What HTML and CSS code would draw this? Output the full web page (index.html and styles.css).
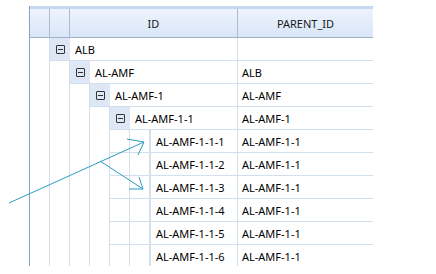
FILE: index.html
```html
<!DOCTYPE html>
<html lang="en">
<head>
    <meta charset="UTF-8">
    <title>TreeList</title>
    <link rel="stylesheet" href="styles.css">
</head>
<body>
    <div class="grid">
        <div class="head">
            <div class="sel"></div>
            <div class="hcell tree"></div>
            <div class="hcell id-head">ID</div>
            <div class="hcell parent-head">PARENT_ID</div>
        </div>

        <div class="row">
            <div class="sel"></div>
            <div class="idcol">
                <div class="exp"><span class="minus"></span></div>
                <div class="txt">ALB</div>
            </div>
            <div class="par"></div>
        </div>
        <div class="row">
            <div class="sel"></div>
            <div class="idcol">
                <div class="ind"></div>
                <div class="exp"><span class="minus"></span></div>
                <div class="txt">AL-AMF</div>
            </div>
            <div class="par">ALB</div>
        </div>
        <div class="row">
            <div class="sel"></div>
            <div class="idcol">
                <div class="ind"></div><div class="ind"></div>
                <div class="exp"><span class="minus"></span></div>
                <div class="txt">AL-AMF-1</div>
            </div>
            <div class="par">AL-AMF</div>
        </div>
        <div class="row">
            <div class="sel"></div>
            <div class="idcol">
                <div class="ind"></div><div class="ind"></div><div class="ind"></div>
                <div class="exp"><span class="minus"></span></div>
                <div class="txt">AL-AMF-1-1</div>
            </div>
            <div class="par">AL-AMF-1</div>
        </div>
        <div class="row">
            <div class="sel"></div>
            <div class="idcol">
                <div class="ind"></div><div class="ind"></div><div class="ind"></div>
                <div class="ind line"></div><div class="ind line"></div>
                <div class="txt">AL-AMF-1-1-1</div>
            </div>
            <div class="par">AL-AMF-1-1</div>
        </div>
        <div class="row">
            <div class="sel"></div>
            <div class="idcol">
                <div class="ind"></div><div class="ind"></div><div class="ind"></div>
                <div class="ind line"></div><div class="ind line"></div>
                <div class="txt">AL-AMF-1-1-2</div>
            </div>
            <div class="par">AL-AMF-1-1</div>
        </div>
        <div class="row">
            <div class="sel"></div>
            <div class="idcol">
                <div class="ind"></div><div class="ind"></div><div class="ind"></div>
                <div class="ind line"></div><div class="ind line"></div>
                <div class="txt">AL-AMF-1-1-3</div>
            </div>
            <div class="par">AL-AMF-1-1</div>
        </div>
        <div class="row">
            <div class="sel"></div>
            <div class="idcol">
                <div class="ind"></div><div class="ind"></div><div class="ind"></div>
                <div class="ind line"></div><div class="ind line"></div>
                <div class="txt">AL-AMF-1-1-4</div>
            </div>
            <div class="par">AL-AMF-1-1</div>
        </div>
        <div class="row">
            <div class="sel"></div>
            <div class="idcol">
                <div class="ind"></div><div class="ind"></div><div class="ind"></div>
                <div class="ind line"></div><div class="ind line"></div>
                <div class="txt">AL-AMF-1-1-5</div>
            </div>
            <div class="par">AL-AMF-1-1</div>
        </div>
        <div class="row last">
            <div class="sel"></div>
            <div class="idcol">
                <div class="ind"></div><div class="ind"></div><div class="ind"></div>
                <div class="ind line"></div><div class="ind line"></div>
                <div class="txt">AL-AMF-1-1-6</div>
            </div>
            <div class="par">AL-AMF-1-1</div>
        </div>
    </div>

    <svg class="arrows" width="436" height="274" viewBox="0 0 436 274">
        <g fill="none" stroke="#2b9cc3" stroke-width="1">
            <path d="M9 203 L144 142"/>
            <path d="M127 139 L144 142 L138 155"/>
            <path d="M100 161 L143 189"/>
            <path d="M139 177 L143 189 L129 189"/>
        </g>
    </svg>
</body>
</html>
```

FILE: styles.css
```css
body {
    margin: 0;
    padding: 6px 0 0 29px;
    background: #fff;
    font-family: 'Noto Sans', 'Open Sans', sans-serif;
    font-size: 11px;
    color: #000;
    position: relative;
    height: 268px;
    overflow: hidden;
}

.grid {
    width: 343px;
    border-left: 1px solid #8aa2bb;
    height: 260px;
    overflow: hidden;
}

.head {
    display: flex;
    height: 32px;
    border-top: 3px solid #c5d8f1;
    border-bottom: 1px solid #9fb2c8;
    background: linear-gradient(#edf3fc, #d9e6f7);
    box-sizing: border-box;
}

.hcell {
    display: flex;
    align-items: center;
    justify-content: center;
    border-right: 1px solid #a9bdd6;
    box-sizing: border-box;
    color: #1a1a1a;
}

.head .sel {
    border-right: 1px solid #a9bdd6;
}

.tree {
    width: 20px;
}

.id-head {
    width: 168px;
}

.parent-head {
    width: 135px;
    border-right: none;
}

.row {
    display: flex;
    height: 23px;
}

.sel {
    width: 20px;
    flex: none;
    border-right: 1px solid #d4dfed;
    box-sizing: border-box;
}

.idcol {
    display: flex;
    width: 188px;
    flex: none;
    border-right: 1px solid #d4dfed;
    box-sizing: border-box;
}

.ind {
    width: 20px;
    flex: none;
    border-right: 1px solid #d4dfed;
    box-sizing: border-box;
}

.ind.line {
    border-bottom: 1px solid #d4dfed;
}

.exp {
    width: 20px;
    flex: none;
    display: flex;
    align-items: center;
    justify-content: center;
    background: #dde7f5;
    border-bottom: 1px solid #d4dfed;
    box-sizing: border-box;
}

.minus {
    width: 9px;
    height: 9px;
    border: 1px solid #333;
    border-radius: 1px;
    box-sizing: border-box;
    position: relative;
}

.minus::after {
    content: "";
    position: absolute;
    left: 1px;
    right: 1px;
    top: 3px;
    height: 1px;
    background: #333;
}

.txt {
    flex: 1;
    display: flex;
    align-items: center;
    padding-left: 5px;
    border-bottom: 1px solid #d4dfed;
    border-left: 1px solid #d4dfed;
    white-space: nowrap;
}

.exp + .txt {
    border-left: none;
}

.par {
    width: 135px;
    flex: none;
    display: flex;
    align-items: center;
    padding-left: 4px;
    box-sizing: border-box;
    border-bottom: 1px solid #d4dfed;
}

.arrows {
    position: absolute;
    left: 0;
    top: 0;
}
```
